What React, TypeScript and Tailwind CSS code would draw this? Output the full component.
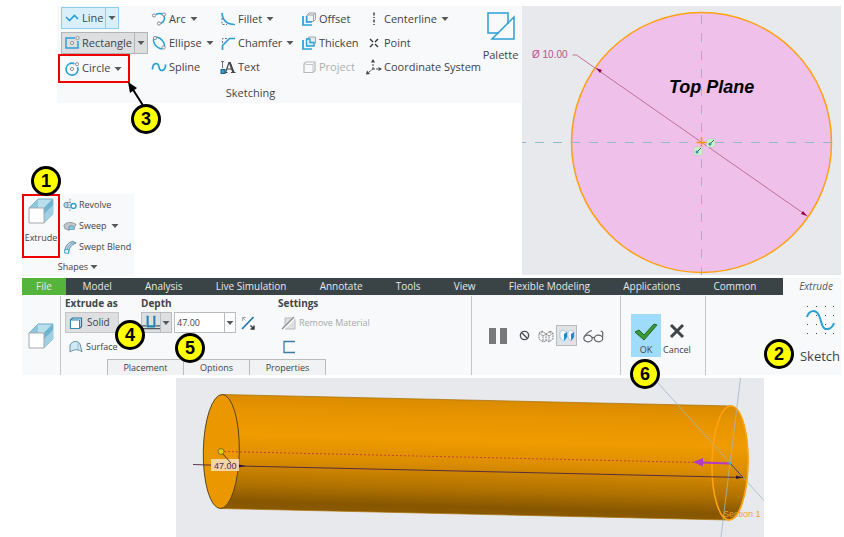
import { ReactNode } from "react";
import clsx from "clsx";

const BLUE = "#2b9fd4";
const GREY = "#6b6f73";

function Svg({ size = 16, children }: { size?: number; children: ReactNode }) {
  return (
    <svg width={size} height={size} viewBox="0 0 16 16" fill="none" className="shrink-0" aria-hidden="true">
      {children}
    </svg>
  );
}

function Caret() {
  return (
    <svg width="8" height="4" viewBox="0 0 8 4" className="shrink-0" aria-hidden="true">
      <path d="M0.5 0h7L4 4z" fill="#55595c" />
    </svg>
  );
}

function Dot({ x, y }: { x: number; y: number }) {
  return <circle cx={x} cy={y} r="1.6" fill="#f8f9fb" stroke="#8b8f93" strokeWidth="1" />;
}

const icons = {
  line: (
    <Svg>
      <path d="M2 7l3.500 3.500 5-5L14 9" stroke={BLUE} strokeWidth="1.7" />
    </Svg>
  ),
  rectangle: (
    <Svg>
      <path d="M11 3H2v10h12V6" stroke={BLUE} strokeWidth="1.5" />
      <Dot x={8} y={8} />
      <Dot x={13.5} y={3} />
    </Svg>
  ),
  circle: (
    <Svg>
      <path d="M10.5 2.7A6 6 0 1 0 13.6 6" stroke={BLUE} strokeWidth="1.6" />
      <Dot x={8} y={8} />
      <Dot x={13} y={3.2} />
    </Svg>
  ),
  arc: (
    <Svg>
      <path d="M5 3.4c4-1.8 8-.6 8.500 3 .3 3-1.500 5-4 6.100" stroke={BLUE} strokeWidth="1.6" />
      <Dot x={3} y={4.5} />
      <Dot x={13} y={3.5} />
      <Dot x={8} y={12.5} />
    </Svg>
  ),
  ellipse: (
    <Svg>
      <ellipse cx="8" cy="8" rx="6.8" ry="4.2" transform="rotate(48 8 8)" stroke={BLUE} strokeWidth="1.5" />
      <Dot x={4} y={3} />
      <Dot x={12.5} y={12.5} />
    </Svg>
  ),
  spline: (
    <Svg>
      <path d="M1.500 10.500C1.500 3 7.500 3 8 8s6.500 5 6.500-2.500" stroke={BLUE} strokeWidth="1.7" />
    </Svg>
  ),
  fillet: (
    <Svg>
      <path d="M2 2c.5 7 5 11.500 13 11.500" stroke={BLUE} strokeWidth="1.7" />
      <path d="M2 7v6.500h5" stroke={GREY} strokeWidth="1" strokeDasharray="2 1.500" />
    </Svg>
  ),
  chamfer: (
    <Svg>
      <path d="M15 3.500H9.500L2.500 10.500V15" stroke={BLUE} strokeWidth="1.7" />
      <path d="M2.500 8V3.500H8" stroke={GREY} strokeWidth="1" strokeDasharray="2 1.500" />
    </Svg>
  ),
  text: (
    <Svg>
      <path d="M5.500 13.500l3.500-10h1l4 10M6.500 10h5M4.500 13.500h3M11 13.500h4.500" stroke="#44484b" strokeWidth="1.2" />
      <path d="M9.500 3l3.800 10.500" stroke="#44484b" strokeWidth="2" />
      <path d="M2.500 9V2.500M1 2.500h3" stroke={GREY} />
      <rect x="1" y="10.500" width="4" height="4" fill={BLUE} stroke="#23607f" />
    </Svg>
  ),
  offset: (
    <Svg>
      <path d="M2 5v9h9" stroke={BLUE} strokeWidth="1.7" />
      <path d="M6 4l2-2h6.500v6.500l-2 2H6zM6 4h6.500v6.500M12.500 4l2-2" stroke="#a0a4a8" fill="#f1f2f4" />
      <path d="M5.500 5v6H11" stroke={BLUE} strokeWidth="1.4" />
    </Svg>
  ),
  thicken: (
    <Svg>
      <path d="M2 5v9h9" stroke={BLUE} strokeWidth="1.7" />
      <path d="M6 4l2-2h6.500v6.500l-2 2H6z" stroke="#a0a4a8" fill="#e8eaec" />
      <path d="M5.500 4v7H13V7.500H9V4z" fill="#d6effa" stroke={BLUE} strokeWidth="1.3" />
    </Svg>
  ),
  project: (
    <Svg>
      <path d="M3 5l2-2h9v8.500l-2 2H3z" stroke="#b5b8ba" strokeWidth="1.2" />
      <path d="M4.500 5.500H12v8M12 5.500L14 3" stroke="#c4c7c9" />
    </Svg>
  ),
  centerline: (
    <Svg>
      <path d="M8 1.500v13" stroke="#3f4346" strokeWidth="1.5" strokeDasharray="3 1.500 1 1.500" />
    </Svg>
  ),
  point: (
    <Svg>
      <path d="M4 4l3 3M12 4L9 7M4 12l3-3M12 12L9 9" stroke="#2f3336" strokeWidth="1.4" />
    </Svg>
  ),
  csys: (
    <Svg>
      <path d="M7 10V4M7 10h5M7 10l-4 3" stroke="#3f4346" strokeDasharray="2 1" />
      <path d="M7 0l2 3.500H5zM16 10l-3.500 2V8zM0 15.500l1-4 3 3.500z" fill="#3f4346" />
    </Svg>
  ),
  revolve: (
    <Svg size={14}>
      <path d="M8 1v14" stroke="#8b8f93" strokeDasharray="2 1" />
      <ellipse cx="3.5" cy="8" rx="2.5" ry="3" fill="#a9d8ec" stroke="#6f8792" />
      <circle cx="12" cy="9" r="2.8" fill="#fff" stroke={BLUE} strokeWidth="1.6" />
      <path d="M4 5h5M4 11h4" stroke="#6f8792" />
    </Svg>
  ),
  sweep: (
    <Svg size={14}>
      <path d="M1 7c3-4 9-4 14-1l-2 4c-3-2-5-2-6-1v4L2 11z" fill="#bfc6ca" stroke="#7b858a" strokeWidth="0.8" />
      <path d="M7 9c2-2 5-1 6 1v2H7z" fill="#8bcce9" stroke="#56829a" strokeWidth="0.7" />
    </Svg>
  ),
  sweptBlend: (
    <Svg size={14}>
      <path d="M2 14C2 7 6 3 11 1.500l4 2C9 5.500 7 9 6.500 15z" fill="#bde1f1" stroke="#55798b" />
      <path d="M4 14c.5-5 3-9 8-11" stroke="#55798b" strokeWidth="0.8" />
      <path d="M2 11h4.500v4H2z" fill="#f5f9fb" stroke={BLUE} />
    </Svg>
  ),
  solid: (
    <Svg>
      <path d="M2.500 5l2-2h9v8.500l-2 2h-9z" fill="#bce4f5" stroke="#2c7398" strokeWidth="1.2" />
      <path d="M2.500 5h9v8.500h-9z" fill="#fff" stroke="#338ab3" />
    </Svg>
  ),
  surface: (
    <Svg>
      <path d="M2 13V6c2-4 8-5 10-1l2 8c-3-3-8-3-12 0z" fill="#cdeaf6" stroke="#6d8fa0" />
      <path d="M10 3v8" stroke="#8db6c8" strokeWidth="0.8" />
    </Svg>
  ),
  depth: (
    <Svg size={18}>
      <path d="M0 10.500h4M12 10.500h4M0 13h16" stroke="#54585b" />
      <path d="M5 2v9h6V2" stroke="#2382b3" strokeWidth="1.8" />
      <path d="M4 2h2M10 2h2" stroke="#2382b3" />
    </Svg>
  ),
  flip: (
    <Svg>
      <path d="M2 14L13.500 2" stroke="#2377ad" strokeWidth="1.8" />
      <path d="M2.500 6V2.500H6M2.500 2.500l3 3" stroke="#a4a8ab" />
      <path d="M14 10.500V14h-3.500M10.500 10.500L14 14" stroke="#303437" strokeWidth="1.4" />
    </Svg>
  ),
  removeMaterial: (
    <Svg>
      <path d="M4 3h10v11H4z" fill="#dfe1e3" stroke="#b6b9bc" />
      <path d="M14 2L1 15" stroke="#f8f9fb" strokeWidth="3" />
      <path d="M13 2L1 14" stroke="#85898c" strokeWidth="1.2" />
    </Svg>
  ),
  thickenSketch: (
    <Svg>
      <path d="M14 2.500H3v11h11" stroke="#3a7da5" strokeWidth="1.3" />
    </Svg>
  ),
};

function ExtrudeIcon() {
  return (
    <svg width="26" height="26" viewBox="0 0 26 26" className="shrink-0" aria-hidden="true">
      <path d="M1 10L10 1h15L16 10z" fill="#a9d8ec" stroke="#6fa8c2" />
      <path d="M10 1h15v14H10z" fill="#c5e5f1" />
      <path d="M10 1h15L16 10H1z" fill="#8ec6de" />
      <path d="M10 2h13l-7 8h-6z" fill="#b9deec" />
      <path d="M16 10l9-9v15l-9 9z" fill="#6cb4d3" stroke="#7fb3c9" strokeWidth="0.7" />
      <path d="M16 16l9-9v9l-9 9z" fill="#9fd0e4" />
      <path d="M1 10h15v15H1z" fill="#fff" stroke="#a5a9ac" />
    </svg>
  );
}

function Badge({ n, className }: { n: number; className: string }) {
  return (
    <span
      className={clsx(
        "absolute z-10 flex size-[30px] items-center justify-center rounded-full border-3 border-black bg-[#ffff00] font-['Liberation_Sans',sans-serif] text-lg leading-none font-bold text-black",
        className,
      )}
    >
      {n}
    </span>
  );
}

interface ToolProps {
  icon: ReactNode;
  label: string;
  menu?: boolean;
  disabled?: boolean;
}

function Tool({ icon, label, menu, disabled }: ToolProps) {
  return (
    <button
      type="button"
      disabled={disabled}
      className={clsx("flex h-6 items-center gap-[2px] whitespace-nowrap", disabled && "text-[#adb0b2]")}
    >
      {icon}
      {label}
      {menu && (
        <span className="pl-[2px]">
          <Caret />
        </span>
      )}
    </button>
  );
}

function SplitTool({ icon, label, tone }: { icon: ReactNode; label: string; tone: string }) {
  return (
    <div className={clsx("flex h-[22px] w-fit border", tone)}>
      <button type="button" className="flex items-center gap-[2px] px-[2px]">
        {icon}
        {label}
      </button>
      <button type="button" aria-label={`${label} options`} className="border-l border-inherit px-[2px]">
        <Caret />
      </button>
    </div>
  );
}

function SketchingGroup() {
  return (
    <section className="relative ml-[35px] flex h-[97px] flex-col bg-[#f8f9fb] pt-px text-[11px]">
      <div className="grid grid-cols-[93px_69px_82px_65px_112px_1fr]">
        <div className="pl-1">
          <SplitTool icon={icons.line} label="Line" tone="border-[#8ccdeb] bg-[#d9f0fb]" />
          <div className="pt-[3px]">
            <SplitTool icon={icons.rectangle} label="Rectangle" tone="border-[#b2b5b8] bg-[#dcdee0]" />
          </div>
          <div className="-ml-[3px] flex h-[29px] w-[72px] items-center border-2 border-[#f00000] pl-1">
            <Tool icon={icons.circle} label="Circle" menu />
          </div>
        </div>
        <div className="pl-px">
          <Tool icon={icons.arc} label="Arc" menu />
          <Tool icon={icons.ellipse} label="Ellipse" menu />
          <Tool icon={icons.spline} label="Spline" />
        </div>
        <div className="pl-px">
          <Tool icon={icons.fillet} label="Fillet" menu />
          <Tool icon={icons.chamfer} label="Chamfer" menu />
          <Tool icon={icons.text} label="Text" />
        </div>
        <div>
          <Tool icon={icons.offset} label="Offset" />
          <Tool icon={icons.thicken} label="Thicken" />
          <Tool icon={icons.project} label="Project" disabled />
        </div>
        <div>
          <Tool icon={icons.centerline} label="Centerline" menu />
          <Tool icon={icons.point} label="Point" />
          <Tool icon={icons.csys} label="Coordinate System" />
        </div>
        <button type="button" className="flex flex-col items-center gap-[6px] self-start pt-1 pl-px">
          <svg width="30" height="30" viewBox="0 0 30 30" fill="none" stroke={BLUE} strokeWidth="1.5" aria-hidden="true">
            <path d="M22 13V2H2v20h11" />
            <path d="M28 6v22H6z" />
          </svg>
          Palette
        </button>
      </div>
      <h2 className="mt-auto pr-[78px] pb-[2px] text-center">Sketching</h2>
      <svg width="20" height="28" viewBox="0 0 20 28" className="absolute top-[76px] left-[71px]" aria-hidden="true">
        <path d="M4 6l12 19" stroke="#000" strokeWidth="2" />
        <path d="M0 0l9 6-7 5z" fill="#000" />
      </svg>
      <Badge n={3} className="top-[98px] left-[74px]" />
    </section>
  );
}

function ShapesGroup() {
  return (
    <section className="relative mt-auto w-[112px] bg-[#f8f9fb] text-[9px]">
      <div className="flex">
        <button
          type="button"
          className="flex h-[64px] w-[38px] shrink-0 flex-col items-center gap-[7px] border-2 border-[#f00000] pt-[2px]"
        >
          <ExtrudeIcon />
          Extrude
        </button>
        <div className="pl-[3px] [&>button]:h-[21px]">
          <Tool icon={icons.revolve} label="Revolve" />
          <Tool icon={icons.sweep} label="Sweep" menu />
          <Tool icon={icons.sweptBlend} label="Swept Blend" />
        </div>
      </div>
      <button type="button" className="flex h-[18px] w-full items-center justify-center gap-[2px]">
        Shapes
        <Caret />
      </button>
      <Badge n={1} className="-top-7 left-[9px]" />
    </section>
  );
}

function SketchView() {
  return (
    <svg
      viewBox="0 0 319 269"
      className="block w-full bg-[#e7e9ed] font-['Liberation_Sans',sans-serif]"
      role="img"
      aria-label="Sketched circle"
    >
      <circle cx="179.5" cy="136.5" r="130" fill="#eec0ea" />
      <g stroke="#93bbc6" strokeWidth="1" strokeDasharray="9 9">
        <path d="M0 136.500H319" strokeDashoffset="5" />
        <path d="M179.500 0V269" strokeDashoffset="9" />
      </g>
      <circle cx="179.5" cy="136.5" r="130" fill="none" stroke="#ffa011" strokeWidth="1.5" />
      <path d="M50.500 49h4L73 62l213 148.500" fill="none" stroke="#c07098" />
      <path d="M74 62l6 2-2 3zM285 210l-6-2 2-3z" fill="#980040" />
      <path d="M174.500 136.500h10M179.500 131v11" stroke="#ff9800" strokeWidth="1.5" />
      {[
        [185, 133],
        [172, 141],
      ].map(([x, y]) => (
        <g key={x}>
          <rect x={x} y={y} width="8" height="8" fill="#caf3c6" stroke="#b9c5b8" strokeWidth="0.5" />
          <path d={`M${x + 2} ${y + 6}l5-5`} stroke="#35605f" />
          <circle cx={x + 3} cy={y + 5} r="1.5" fill="#348cad" />
        </g>
      ))}
      <text x="10" y="52" fontSize="10" fill="#b5538c">
        Ø 10.00
      </text>
      <text x="147" y="87" fontSize="18" fontWeight="700" fontStyle="italic">
        Top Plane
      </text>
    </svg>
  );
}

const TABS = [
  "Model",
  "Analysis",
  "Live Simulation",
  "Annotate",
  "Tools",
  "View",
  "Flexible Modeling",
  "Applications",
  "Common",
];

function TabBar() {
  return (
    <nav className="flex h-[17px] bg-[#3a4346] text-[10px] whitespace-nowrap text-[#e6e8e9]">
      <button type="button" className="w-11 bg-[#55b43c]">
        File
      </button>
      <div className="flex flex-1 pr-[10px]">
        {TABS.map((tab) => (
          <button key={tab} type="button" className="flex-auto">
            {tab}
          </button>
        ))}
      </div>
      <button type="button" className="w-[58px] bg-[#f8f9fb] pl-2 text-[#55595c] italic">
        Extrude
      </button>
    </nav>
  );
}

function ExtrudeOptions() {
  return (
    <div className="flex min-w-0 flex-1 flex-col border-l border-[#c3c6c9] pl-1">
      <div className="flex">
        <div role="group" aria-labelledby="extrude-as" className="relative w-[76px]">
          <h3 id="extrude-as" className="h-4 font-bold">
            Extrude as
          </h3>
          <button
            type="button"
            className="flex h-[21px] w-[54px] items-center gap-[3px] border border-[#c3c6c9] bg-[#dddfe1] pl-[2px]"
          >
            {icons.solid}
            Solid
          </button>
          <button type="button" className="mt-[3px] flex h-[21px] items-center gap-[2px] pl-[3px] text-[9px]">
            {icons.surface}
            Surface
          </button>
          <Badge n={4} className="top-6 left-[50px]" />
        </div>
        <div role="group" aria-labelledby="depth" className="relative w-[137px]">
          <h3 id="depth" className="h-4 font-bold">
            Depth
          </h3>
          <div className="flex h-[21px] items-stretch gap-[2px]">
            <div className="flex border border-[#b9bcbf] bg-[#dddfe1]">
              <button type="button" aria-label="Depth type">
                {icons.depth}
              </button>
              <button type="button" aria-label="Depth types" className="border-l border-[#b9bcbf] px-px">
                <Caret />
              </button>
            </div>
            <div className="flex w-[62px] border border-[#b9bcbf] bg-white">
              <input aria-label="Depth value" defaultValue="47.00" className="w-0 min-w-0 flex-1 pl-[2px] text-[9px] outline-none" />
              <button type="button" aria-label="Recent values" className="border-l border-[#b9bcbf] px-px">
                <Caret />
              </button>
            </div>
            <button type="button" aria-label="Flip direction" className="pl-[2px]">
              {icons.flip}
            </button>
          </div>
          <Badge n={5} className="top-[37px] left-[34px]" />
        </div>
        <div role="group" aria-labelledby="settings">
          <h3 id="settings" className="h-4 font-bold">
            Settings
          </h3>
          <button type="button" disabled className="flex h-[21px] items-center gap-[2px] pl-[3px] text-[9px] text-[#a6a9ab]">
            {icons.removeMaterial}
            Remove Material
          </button>
          <button type="button" aria-label="Thicken Sketch" className="mt-[3px] flex h-[21px] items-center pl-[3px]">
            {icons.thickenSketch}
          </button>
        </div>
      </div>
      <div className="mt-auto ml-[42px] flex h-4 w-[219px] border border-b-0 border-[#b9bcbf] bg-[#f1f2f4] text-[9px]">
        <button type="button" className="flex-1">
          Placement
        </button>
        <button type="button" className="w-[67px] border-x border-[#b9bcbf]">
          Options
        </button>
        <button type="button" className="flex-1">
          Properties
        </button>
      </div>
    </div>
  );
}

function PreviewControls() {
  return (
    <div className="flex w-[149px] items-center border-l border-[#c3c6c9] pl-[17px]">
      <button type="button" aria-label="Pause" className="flex gap-1">
        <span className="h-4 w-[7px] bg-[#77797b]" />
        <span className="h-4 w-[7px] bg-[#77797b]" />
      </button>
      <button type="button" aria-label="No preview" className="pl-3">
        <Svg size={11}>
          <circle cx="8" cy="8" r="6" stroke="#4c5053" strokeWidth="2" />
          <path d="M4 4l8 8" stroke="#4c5053" strokeWidth="2" />
        </Svg>
      </button>
      <button type="button" aria-label="Unattached preview" className="pl-2">
        <Svg>
          <path
            d="M1 5l3-2 4 3v7l-3 1-4-3zM1 5l4 3v6M5 8l3-2M8 6l4-3 3 2v6l-4 3-3-2M15 5l-4 3v6M11 8L8 6M4 3v3M12 3v3"
            stroke="#777b7e"
            strokeWidth="0.9"
            strokeDasharray="2 0.700"
          />
        </Svg>
      </button>
      <button
        type="button"
        aria-label="Attached preview"
        className="ml-[2px] flex size-[21px] items-center justify-center border border-[#b9bcbf] bg-[#e0e2e4]"
      >
        <Svg>
          <path d="M1 4l3-2 4 2v5l-3 4-4-3z" fill="#f7fcff" stroke="#8bbfd8" strokeWidth="0.7" />
          <path d="M5 6l3-2v5l-3 4z" fill="#178fcb" />
          <path d="M9 4l3-2 3 2v5l-3 4-3-3z" fill="#f7fcff" stroke="#8bbfd8" strokeWidth="0.7" />
          <path d="M12 6l3-2v5l-3 4z" fill="#178fcb" />
        </Svg>
      </button>
      <button type="button" aria-label="Verify" className="pl-[6px]">
        <svg width="21" height="14" viewBox="0 0 21 14" fill="none" stroke="#606467" strokeWidth="1.2" aria-hidden="true">
          <ellipse cx="5" cy="9.5" rx="4.2" ry="3.3" />
          <ellipse cx="15.5" cy="9.5" rx="4.2" ry="3.3" />
          <path d="M9 9c.5-1 2-1 2.500 0M1 8c2-3 5-6 8-6.500M19.700 8V3l-2-1" />
        </svg>
      </button>
    </div>
  );
}

function Ribbon() {
  return (
    <section className="mt-[2px] text-[10px]">
      <TabBar />
      <div className="flex h-20 bg-[#f8f9fb] pt-px">
        <div className="flex w-[38px] shrink-0 items-center justify-center">
          <ExtrudeIcon />
        </div>
        <ExtrudeOptions />
        <PreviewControls />
        <div className="relative flex w-[85px] items-center gap-[2px] border-l border-[#c3c6c9] pl-[10px]">
          <button type="button" className="flex h-[43px] w-[30px] flex-col items-center justify-end bg-[#9fdcfb]">
            <svg width="24" height="20" viewBox="0 0 24 20" aria-hidden="true">
              <path d="M1 10l4-2 5 5L20 2l3 1-13 15z" fill="#3a9a35" stroke="#21661f" />
            </svg>
            <span className="h-[15px] text-[9px] leading-[15px]">OK</span>
          </button>
          <button type="button" className="flex h-[43px] flex-col items-center justify-end">
            <svg width="16" height="20" viewBox="0 0 16 20" aria-hidden="true">
              <path d="M2 3l12 12M14 3L2 15" stroke="#404447" strokeWidth="3" />
            </svg>
            <span className="h-[15px] text-[9px] leading-[15px]">Cancel</span>
          </button>
          <Badge n={6} className="top-[63px] left-[9px]" />
        </div>
        <div className="relative w-[136px] border-l border-[#c3c6c9]">
          <button type="button" className="ml-auto flex w-[42px] flex-col items-center gap-[11px] pt-2 text-[13px]">
            <svg width="30" height="32" viewBox="0 0 30 32" fill="none" aria-hidden="true">
              {[2, 11, 20, 29].map((y) =>
                [2, 11, 20, 28].map((x) => <rect key={`${x}-${y}`} x={x} y={y} width="1" height="1" fill="#44484b" />),
              )}
              <path d="M2 13C4 6 12 4 15 14c2 7 3 12 8 11 3-.5 5-3 6-6" stroke={BLUE} strokeWidth="2" />
            </svg>
            Sketch
          </button>
          <Badge n={2} className="top-[43px] left-[58px]" />
        </div>
      </div>
    </section>
  );
}

function ModelView() {
  return (
    <div className="mt-[3px] mr-[77px] ml-[154px]">
      <svg
        viewBox="0 0 588 159"
        className="block w-full bg-[#e7e9ed] font-['Liberation_Sans',sans-serif]"
        role="img"
        aria-label="Extruded cylinder"
      >
        <defs>
          <linearGradient id="body" gradientUnits="userSpaceOnUse" x1="300" y1="22" x2="297" y2="137">
            <stop offset="0" stopColor="#d98b00" />
            <stop offset="0.12" stopColor="#e69300" />
            <stop offset="0.35" stopColor="#f09b00" />
            <stop offset="0.55" stopColor="#dc8e00" />
            <stop offset="0.78" stopColor="#b17200" />
            <stop offset="0.93" stopColor="#875700" />
            <stop offset="1" stopColor="#8a5900" />
          </linearGradient>
        </defs>
        <path d="M46 16.500L555.500 28A18 57 1 0 1 552.500 142L44 130.500z" fill="url(#body)" stroke="#a86d00" strokeWidth="0.7" />
        <ellipse cx="45.3" cy="73.5" rx="18" ry="57" transform="rotate(1 45 73)" fill="#ea9700" stroke="#4c3a17" strokeWidth="0.9" />
        <g stroke="#9fb9b9" strokeWidth="0.8">
          <path d="M482 5L588 122.500" />
          <path d="M564.500 0L545 159" />
        </g>
        <ellipse cx="554" cy="85" rx="18" ry="57" transform="rotate(1 554 85)" fill="none" stroke="#ffa20d" strokeWidth="1.6" />
        <path d="M48 73.500L520 84.500" stroke="#c23d35" strokeDasharray="2 2" strokeWidth="0.9" />
        <path d="M17 86.500L63 88L567 99.500L554 85" fill="none" stroke="#4b2442" strokeWidth="0.9" />
        <path d="M63 86.500l7 1.500-7 1.500zM567 99.500l-7 1.500v-3.500z" fill="#32183c" />
        <rect x="35" y="81" width="28" height="12" fill="#f4ddb8" fillOpacity="0.9" />
        <path d="M46 75l9 10" stroke="#5b3330" />
        <circle cx="45" cy="73.5" r="3" fill="#e8cb18" stroke="#7a7420" />
        <text x="38" y="90.5" fontSize="9" fill="#562a50">
          47.00
        </text>
        <path d="M525 84.500L554 85.500" stroke="#b13bc6" strokeWidth="2" />
        <path d="M517 84l10-4v8.500z" fill="#b13bc6" />
        <circle cx="554" cy="85.5" r="1.2" fill="#39b0c7" />
        <text x="547" y="139" fontSize="9" fill="#f0a133">
          Section 1
        </text>
      </svg>
    </div>
  );
}

export default function App() {
  return (
    <main className="bg-white pt-[6px] pr-[3px] pl-[22px] font-['Open_Sans','Noto_Sans',sans-serif] text-[#3f4346]">
      <div className="grid grid-cols-[minmax(0,1fr)_319px]">
        <div className="flex min-h-[270px] flex-col">
          <SketchingGroup />
          <ShapesGroup />
        </div>
        <SketchView />
      </div>
      <Ribbon />
      <ModelView />
    </main>
  );
}
